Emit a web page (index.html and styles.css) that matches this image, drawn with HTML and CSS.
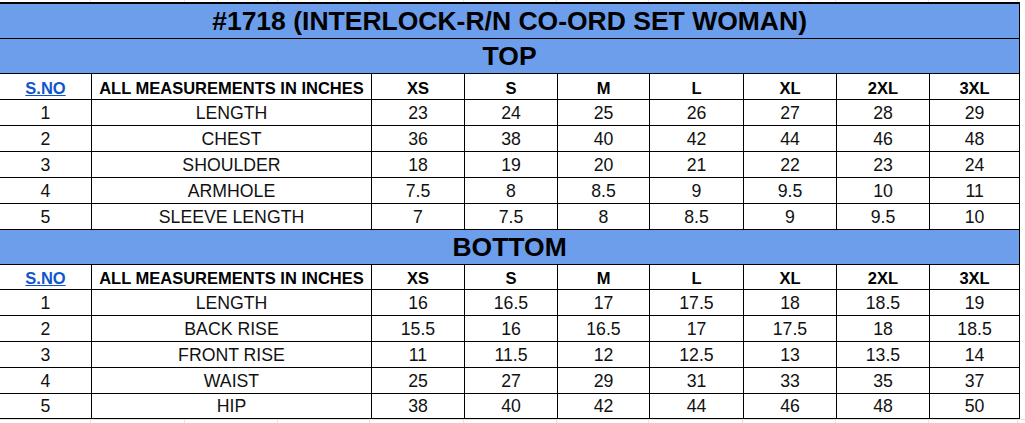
FILE: index.html
```html
<!DOCTYPE html>
<html>
<head>
<meta charset="utf-8">
<link rel="stylesheet" href="styles.css">
</head>
<body>
<div class="sheet">
  <div class="grid-strip strip-top">
    <span style="width:91px"></span><span style="width:94px"></span><span style="width:93px"></span><span style="width:92px"></span><span style="width:94px"></span><span style="width:93px"></span><span style="width:92px"></span><span style="width:94px"></span><span style="width:93px"></span><span style="width:93px"></span><span style="width:89px"></span>
  </div>
  <table class="size-chart">
    <colgroup>
      <col class="c-sno"><col class="c-desc"><col class="c-s1"><col class="c-s2"><col class="c-s3"><col class="c-s4"><col class="c-s5"><col class="c-s6"><col class="c-s7">
    </colgroup>
    <tbody>
      <tr class="band title-row"><td colspan="9">#1718 (INTERLOCK-R/N CO-ORD SET WOMAN)</td></tr>
      <tr class="band section-row"><td colspan="9">TOP</td></tr>
      <tr class="head-row">
        <td><a class="sno-link" href="#">S.NO</a></td>
        <td>ALL MEASUREMENTS IN INCHES</td>
        <td>XS</td><td>S</td><td>M</td><td>L</td><td>XL</td><td>2XL</td><td>3XL</td>
      </tr>
      <tr class="data-row"><td>1</td><td>LENGTH</td><td>23</td><td>24</td><td>25</td><td>26</td><td>27</td><td>28</td><td>29</td></tr>
      <tr class="data-row"><td>2</td><td>CHEST</td><td>36</td><td>38</td><td>40</td><td>42</td><td>44</td><td>46</td><td>48</td></tr>
      <tr class="data-row"><td>3</td><td>SHOULDER</td><td>18</td><td>19</td><td>20</td><td>21</td><td>22</td><td>23</td><td>24</td></tr>
      <tr class="data-row"><td>4</td><td>ARMHOLE</td><td>7.5</td><td>8</td><td>8.5</td><td>9</td><td>9.5</td><td>10</td><td>11</td></tr>
      <tr class="data-row"><td>5</td><td>SLEEVE LENGTH</td><td>7</td><td>7.5</td><td>8</td><td>8.5</td><td>9</td><td>9.5</td><td>10</td></tr>
      <tr class="band section-row"><td colspan="9">BOTTOM</td></tr>
      <tr class="head-row head-compact">
        <td><a class="sno-link" href="#">S.NO</a></td>
        <td>ALL MEASUREMENTS IN INCHES</td>
        <td>XS</td><td>S</td><td>M</td><td>L</td><td>XL</td><td>2XL</td><td>3XL</td>
      </tr>
      <tr class="data-row"><td>1</td><td>LENGTH</td><td>16</td><td>16.5</td><td>17</td><td>17.5</td><td>18</td><td>18.5</td><td>19</td></tr>
      <tr class="data-row"><td>2</td><td>BACK RISE</td><td>15.5</td><td>16</td><td>16.5</td><td>17</td><td>17.5</td><td>18</td><td>18.5</td></tr>
      <tr class="data-row"><td>3</td><td>FRONT RISE</td><td>11</td><td>11.5</td><td>12</td><td>12.5</td><td>13</td><td>13.5</td><td>14</td></tr>
      <tr class="data-row"><td>4</td><td>WAIST</td><td>25</td><td>27</td><td>29</td><td>31</td><td>33</td><td>35</td><td>37</td></tr>
      <tr class="data-row last"><td>5</td><td>HIP</td><td>38</td><td>40</td><td>42</td><td>44</td><td>46</td><td>48</td><td>50</td></tr>
    </tbody>
  </table>
  <div class="grid-strip strip-bottom">
    <span style="width:91px"></span><span style="width:94px"></span><span style="width:93px"></span><span style="width:92px"></span><span style="width:94px"></span><span style="width:93px"></span><span style="width:92px"></span><span style="width:94px"></span><span style="width:93px"></span><span style="width:93px"></span><span style="width:89px"></span>
  </div>
</div>
</body>
</html>
```

FILE: styles.css
```css
html, body {
  margin: 0;
  padding: 0;
  background: #ffffff;
}

.sheet {
  width: 1025px;
  height: 423px;
  overflow: hidden;
  font-family: "Liberation Sans", Arial, sans-serif;
  color: #000;
}

.grid-strip {
  display: flex;
  box-sizing: border-box;
}

.grid-strip span {
  display: block;
  flex: none;
  box-sizing: border-box;
  border-right: 1px solid #e3e3e3;
  height: 100%;
}

.strip-top {
  height: 2px;
}

.strip-bottom {
  height: 8px;
  border-top: 1px solid #e3e3e3;
}

.size-chart {
  border-collapse: collapse;
  table-layout: fixed;
  width: 1020px;
  margin-left: -1px;
}

.c-sno { width: 92px; }
.c-desc { width: 280px; }
.c-s1 { width: 93px; }
.c-s2 { width: 93px; }
.c-s3 { width: 92px; }
.c-s4 { width: 94px; }
.c-s5 { width: 93px; }
.c-s6 { width: 93px; }
.c-s7 { width: 90px; }

.size-chart td {
  border: 1px solid #000;
  padding: 0;
  text-align: center;
  vertical-align: middle;
  white-space: nowrap;
  overflow: hidden;
}

.band td {
  background: #6d9eeb;
  font-weight: bold;
  font-size: 26.5px;
  height: 34px;
  line-height: 30px;
}

.title-row td {
  border-top: 2px solid #000;
  line-height: 28px;
}

.head-row td {
  font-weight: bold;
  font-size: 16.5px;
  height: 24px;
  line-height: 20px;
  vertical-align: bottom;
  padding-bottom: 1px;
}

.head-row.head-compact td {
  height: 23px;
  line-height: 19px;
}

.data-row td {
  font-size: 17.7px;
  height: 25px;
  line-height: 22px;
  color: #111;
}

.data-row.last td {
  height: 24px;
}

.sno-link {
  color: #1155cc;
  text-decoration: underline;
  font-weight: bold;
}
```
